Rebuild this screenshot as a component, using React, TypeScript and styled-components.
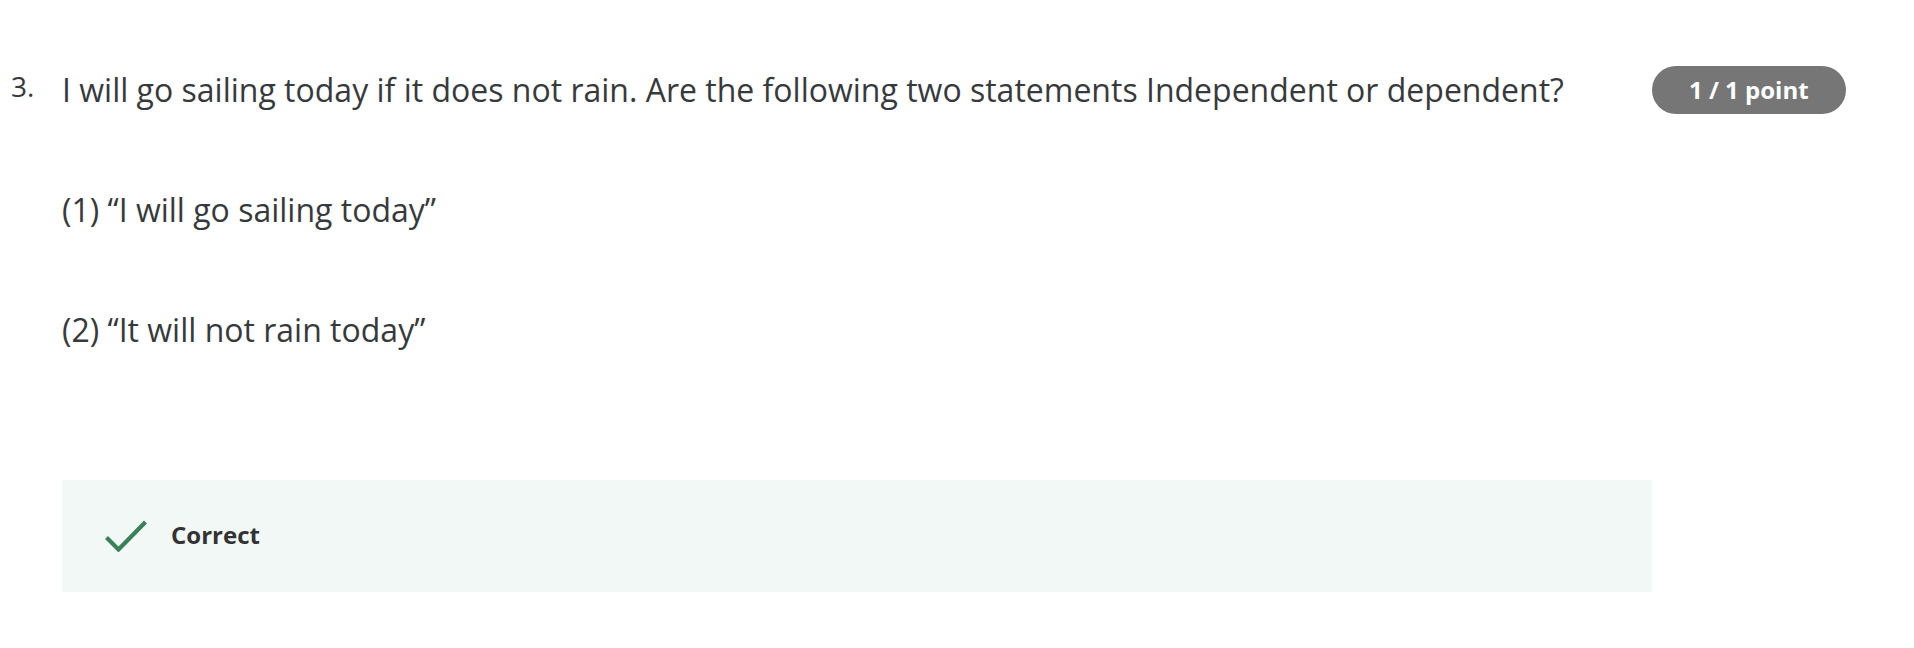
import React from "react";
import styled, { createGlobalStyle } from "styled-components";

const Global = createGlobalStyle`
  html, body { margin: 0; padding: 0; background: #ffffff; }
  body { font-family: "Open Sans", "Liberation Sans", sans-serif; color: #333333; }
`;

const Page = styled.div`
  width: 1914px;
  height: 648px;
  box-sizing: border-box;
  padding-top: 66px;
  display: flex;
  align-items: flex-start;
`;

const Number = styled.div`
  width: 62px;
  flex: none;
  box-sizing: border-box;
  padding-left: 11px;
  margin-top: 2px;
  font-size: 28px;
  line-height: 36px;
  color: #373a3c;
`;

const Body = styled.div`
  width: 1590px;
  flex: none;
  display: flex;
  flex-direction: column;
`;

const Para = styled.p<{ $gap: number }>`
  margin: ${(p) => p.$gap}px 0 0 0;
  font-size: 32px;
  line-height: 45px;
  color: #373a3c;
`;

const Feedback = styled.div`
  margin-top: 128px;
  height: 112px;
  background: #f2f8f6;
  display: flex;
  align-items: center;
  padding-left: 43px;
  gap: 24px;
`;

const Label = styled.span`
  font-size: 24px;
  font-weight: 700;
  line-height: 32px;
  padding-bottom: 3px;
  color: #333333;
`;

const Badge = styled.div`
  flex: none;
  height: 48px;
  box-sizing: border-box;
  padding: 0 37px;
  border-radius: 24px;
  background: #767676;
  color: #ffffff;
  font-size: 24px;
  font-weight: 700;
  line-height: 48px;
  white-space: nowrap;
`;

const Check = () => (
  <svg width="42" height="32" viewBox="0 0 42 32" fill="none">
    <polyline points="1.5,17.5 13.5,29.5 40.5,2" stroke="#3a8058" strokeWidth="4.2" />
  </svg>
);

export default function App() {
  return (
    <>
      <Global />
      <Page>
        <Number>3.</Number>
        <Body>
          <Para $gap={1}>
            I will go sailing today if it does not rain. Are the following two statements Independent or dependent?
          </Para>
          <Para $gap={75}>(1) “I will go sailing today”</Para>
          <Para $gap={75}>(2) “It will not rain today”</Para>
          <Feedback>
            <Check />
            <Label>Correct</Label>
          </Feedback>
        </Body>
        <Badge>1 / 1 point</Badge>
      </Page>
    </>
  );
}
